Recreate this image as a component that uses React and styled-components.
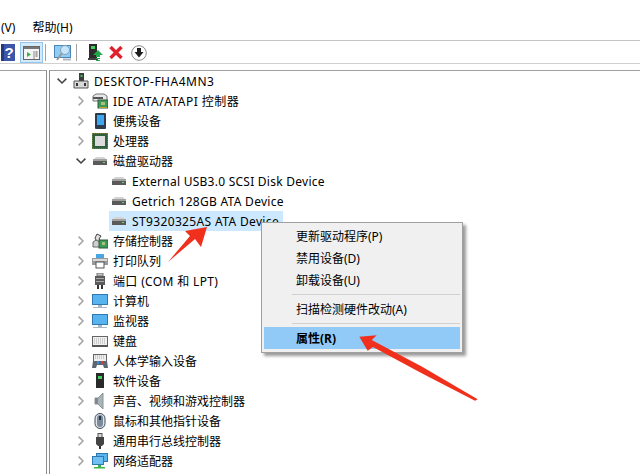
import styled, { createGlobalStyle } from "styled-components";

const GlobalStyle = createGlobalStyle`
  html, body {
    margin: 0;
    padding: 0;
    background: #fff;
  }
  body {
    font-family: "Noto Sans", "Noto Sans CJK SC", sans-serif;
    font-size: 12px;
    color: #000;
  }
`;

const Page = styled.div`
  position: relative;
  width: 640px;
  height: 474px;
  overflow: hidden;
  background: #fff;
`;

const MenuBar = styled.div`
  display: flex;
  gap: 17px;
  height: 40px;
  padding: 19px 0 0 1px;
  box-sizing: border-box;
  line-height: 18px;
`;

const Toolbar = styled.div`
  display: flex;
  align-items: center;
  height: 24px;
  box-sizing: border-box;
  padding-top: 1px;
  border-top: 1px solid #c4c4c8;
  border-bottom: 1px solid #d0d0d0;
`;

const ToolButton = styled.div`
  display: flex;
  align-items: center;
  justify-content: center;
  flex: none;
  width: ${(p) => p.$w}px;
  height: 21px;
  box-sizing: border-box;
  margin-left: ${(p) => p.$ml || 0}px;
  ${(p) => p.$active && "background: #d4e9fa; border: 1px solid #93c6ef;"}
`;

const ToolSep = styled.div`
  flex: none;
  width: 1px;
  height: 17px;
  margin: 0 ${(p) => p.$r}px 0 ${(p) => p.$l}px;
  background: #a0a0a0;
`;

const Body = styled.div`
  display: flex;
  height: 410px;
  padding-top: 6px;
  box-sizing: border-box;
`;

const SidePane = styled.div`
  flex: none;
  width: 47px;
  box-sizing: border-box;
  border-top: 1px solid #a0a0a0;
  border-right: 1px solid #8c8c8c;
`;

const TreePane = styled.div`
  flex: 1;
  margin-left: 2px;
  box-sizing: border-box;
  border-top: 1px solid #a0a0a0;
  border-left: 1px solid #8c8c8c;
`;

const Row = styled.div`
  display: flex;
  align-items: center;
  height: 20px;
  padding-left: ${(p) => 5 + p.$depth * 19}px;
`;

const Expander = styled.div`
  display: flex;
  align-items: center;
  justify-content: center;
  flex: none;
  width: 13px;
  height: 20px;
  margin-right: 3px;
`;

const RowLabel = styled.div`
  display: flex;
  align-items: center;
  gap: 6px;
  height: 20px;
  padding: 0 4px 0 3px;
  white-space: nowrap;
  letter-spacing: ${(p) => p.$track || 0}px;
  background: ${(p) => (p.$selected ? "#cce8ff" : "transparent")};
`;

const IconBox = styled.svg`
  flex: none;
  display: block;
  width: 16px;
  height: 16px;
  margin-left: -1px;
  margin-right: -1px;
`;

const ContextMenu = styled.div`
  position: absolute;
  left: 261px;
  top: 222px;
  width: 202px;
  height: 131px;
  box-sizing: border-box;
  padding: 2px;
  background: #f0f0f0;
  border: 1px solid #a0a0a0;
  box-shadow: 3px 3px 3px rgba(0, 0, 0, 0.4);
`;

const MenuItem = styled.div`
  display: flex;
  align-items: center;
  height: 22px;
  padding-left: 32px;
  background: ${(p) => (p.$hot ? "#91c9f7" : "transparent")};
  font-weight: ${(p) => (p.$hot ? 700 : 400)};
`;

const MenuSep = styled.div`
  height: 1px;
  margin: 3px 0 3px 28px;
  background: #d0d0d0;
`;

const Arrow = styled.svg`
  position: absolute;
  left: ${(p) => p.$x}px;
  top: ${(p) => p.$y}px;
`;

const Chevron = ({ open }) => (
  <svg width="10" height="10" viewBox="0 0 10 10">
    {open ? (
      <path d="M.6 2.6l4.4 4.4 4.4-4.4" fill="none" stroke="#444" strokeWidth="1.5" />
    ) : (
      <path d="M2.6.6l4.4 4.4-4.4 4.4" fill="none" stroke="#a6a6a6" strokeWidth="1.5" />
    )}
  </svg>
);

const icons = {
  computer: (
    <>
      <rect x="6" y="0" width="5" height="8" fill="#3c3c3c" />
      <rect x="7.5" y="2" width="2" height="2" fill="#3fc060" />
      <path d="M1 8h14v7H1z" fill="#d8d8d8" stroke="#555" />
      <rect x="3" y="10" width="2" height="3" fill="#333" />
      <rect x="11" y="10" width="2" height="3" fill="#333" />
    </>
  ),
  ide: (
    <>
      <path d="M1 3l3-2h8l3 2v5H1z" fill="#e8e8e8" stroke="#777" />
      <rect x="1" y="4" width="10" height="2" fill="#555" />
      <rect x="6" y="7" width="10" height="8" fill="#3f9a5a" stroke="#2c5d3a" />
      <rect x="9" y="9" width="4" height="3" fill="#a8c27a" />
      <rect x="7" y="14" width="8" height="1" fill="#c2a030" />
    </>
  ),
  portable: (
    <>
      <rect x="3" y="0" width="11" height="16" rx="1" fill="#2c3c4c" />
      <rect x="5" y="2" width="7" height="10" fill="#3ea6ee" />
    </>
  ),
  cpu: (
    <>
      <rect x="0" y="0" width="16" height="16" fill="#3c6a3c" stroke="#b09030" strokeDasharray="1 1" />
      <rect x="1" y="1" width="14" height="14" fill="#2f5f3f" />
      <rect x="3" y="3" width="10" height="10" fill="#dcdcdc" />
    </>
  ),
  disk: (
    <>
      <path d="M2 6l2-2h8l2 2z" fill="#d4d4d4" />
      <rect x="1" y="7" width="14" height="5" fill="#5a5a5a" />
      <rect x="1" y="6" width="14" height="2" fill="#a0a0a0" />
      <rect x="11" y="9" width="2" height="1" fill="#5fe060" />
    </>
  ),
  storage: (
    <>
      <path d="M5 1l4 2-2 3 2 2-4 1-2-4z" fill="#e0e0e0" stroke="#444" />
      <path d="M1 9l3-2 4 2v5H1z" fill="#cfcfcf" stroke="#666" />
      <rect x="7" y="7" width="9" height="8" fill="#3f9a5a" stroke="#2c5d3a" />
      <rect x="10" y="9" width="3" height="3" fill="#a8c27a" />
    </>
  ),
  printer: (
    <>
      <rect x="4" y="1" width="8" height="4" fill="#46a6e6" />
      <path d="M0 5h16v7H0z" fill="#9a9a9a" />
      <rect x="1" y="6" width="14" height="2" fill="#d8d8d8" />
      <rect x="4" y="9" width="8" height="6" fill="#fff" stroke="#555" />
    </>
  ),
  port: (
    <>
      <rect x="5" y="0" width="6" height="3" fill="#c0c0c0" stroke="#777" />
      <rect x="3" y="3" width="10" height="9" fill="#5a5a5a" />
      <rect x="4" y="5" width="8" height="1" fill="#aaa" />
      <rect x="4" y="8" width="8" height="1" fill="#aaa" />
      <rect x="5" y="12" width="2" height="4" fill="#333" />
      <rect x="9" y="12" width="2" height="4" fill="#333" />
    </>
  ),
  monitor: (
    <>
      <rect x="0.5" y="1.5" width="15" height="10" fill="#57b4ee" stroke="#2f78b0" />
      <rect x="6" y="12" width="4" height="2" fill="#a8b8c4" />
      <rect x="1" y="14" width="14" height="1" fill="#a8b8c4" />
    </>
  ),
  keyboard: (
    <>
      <rect x="0.5" y="3.5" width="15" height="9" fill="#f0f0f0" stroke="#666" />
      <path d="M2 6h12M2 8h12M2 10h12" stroke="#aaa" strokeDasharray="1 1" />
      <rect x="0" y="12" width="16" height="2" fill="#555" />
    </>
  ),
  hid: (
    <>
      <rect x="1.5" y="1.5" width="13" height="7" fill="#eee" stroke="#666" />
      <path d="M3 3h9M3 5h9" stroke="#aaa" strokeDasharray="1 1" />
      <path d="M1 8h14l1 7h-4l-1-3H5l-1 3H0z" fill="#5c6670" />
      <rect x="5" y="8" width="2" height="3" fill="#2f8fe0" />
      <rect x="9" y="8" width="2" height="3" fill="#d04040" />
    </>
  ),
  software: (
    <>
      <rect x="4" y="0" width="8" height="15" fill="#2a2a2a" />
      <rect x="6" y="3" width="4" height="3" fill="#3fd060" />
    </>
  ),
  sound: (
    <>
      <path d="M3 5h3l5-5v16l-5-5H3z" fill="#a8b4b8" stroke="#8a9498" />
      <rect x="3" y="5" width="3" height="6" fill="#7f8a8e" />
    </>
  ),
  mouse: (
    <>
      <rect x="3" y="0.5" width="10" height="15" rx="5" fill="#dfe4ea" stroke="#3c4a58" />
      <rect x="5" y="2" width="6" height="12" rx="3" fill="#7a8a9a" />
      <rect x="7" y="3" width="2" height="4" fill="#2a3440" />
    </>
  ),
  usb: (
    <>
      <rect x="6" y="0.5" width="4" height="4" fill="#d8d8d8" stroke="#555" />
      <path d="M4 4h8v7l-2 2h-4l-2-2z" fill="#444" />
      <rect x="7" y="13" width="2" height="3" fill="#333" />
    </>
  ),
  network: (
    <>
      <rect x="4.5" y="0.5" width="11" height="8" fill="#57b4ee" stroke="#2f78b0" />
      <rect x="0.5" y="3.5" width="11" height="8" fill="#6fc0f2" stroke="#2f78b0" />
      <path d="M6 12h3v2h4v1.6H2V14h4z" fill="#3cb44a" />
    </>
  ),
};

const Icon = ({ name }) => (
  <IconBox viewBox="0 0 16 16">{icons[name]}</IconBox>
);

const rows = [
  { depth: 0, open: true, icon: "computer", label: "DESKTOP-FHA4MN3", track: 0.5 },
  { depth: 1, icon: "ide", label: "IDE ATA/ATAPI 控制器", track: 0.47 },
  { depth: 1, icon: "portable", label: "便携设备" },
  { depth: 1, icon: "cpu", label: "处理器" },
  { depth: 1, open: true, icon: "disk", label: "磁盘驱动器" },
  { depth: 2, leaf: true, icon: "disk", label: "External USB3.0 SCSI Disk Device", track: 0.25 },
  { depth: 2, leaf: true, icon: "disk", label: "Getrich 128GB ATA Device", track: 0.29 },
  { depth: 2, leaf: true, icon: "disk", label: "ST9320325AS ATA Device", track: 0.36, selected: true },
  { depth: 1, icon: "storage", label: "存储控制器" },
  { depth: 1, icon: "printer", label: "打印队列" },
  { depth: 1, icon: "port", label: "端口 (COM 和 LPT)", track: 0.35 },
  { depth: 1, icon: "monitor", label: "计算机" },
  { depth: 1, icon: "monitor", label: "监视器" },
  { depth: 1, icon: "keyboard", label: "键盘" },
  { depth: 1, icon: "hid", label: "人体学输入设备" },
  { depth: 1, icon: "software", label: "软件设备" },
  { depth: 1, icon: "sound", label: "声音、视频和游戏控制器" },
  { depth: 1, icon: "mouse", label: "鼠标和其他指针设备" },
  { depth: 1, icon: "usb", label: "通用串行总线控制器" },
  { depth: 1, icon: "network", label: "网络适配器" },
];

export default function App() {
  return (
    <Page>
      <GlobalStyle />
      <MenuBar>
        <span>(V)</span>
        <span>帮助(H)</span>
      </MenuBar>
      <Toolbar>
        <ToolButton $w={14} $ml={1}>
          <svg width="14" height="17" viewBox="0 0 14 17">
            <rect width="14" height="17" fill="#3b55a8" />
            <rect x="0" y="0" width="3" height="17" fill="#26397c" />
            <text x="8" y="14" fill="#fff" fontSize="15" fontWeight="700" textAnchor="middle" fontFamily="Liberation Sans">?</text>
          </svg>
        </ToolButton>
        <ToolButton $w={23} $ml={5} $active>
          <svg width="17" height="14" viewBox="0 0 17 14">
            <rect x="0.5" y="0.5" width="16" height="13" fill="#f4f4f4" stroke="#666" />
            <rect x="1" y="1" width="15" height="2" fill="#777" />
            <path d="M4 6l4 2.5L4 11z" fill="#3ab04a" />
            <path d="M11 5v8" stroke="#888" />
            <path d="M12.5 6h2M12.5 8h2M12.5 10h2" stroke="#555" />
          </svg>
        </ToolButton>
        <ToolSep $l={2} $r={8} />
        <ToolButton $w={17}>
          <svg width="17" height="16" viewBox="0 0 17 16">
            <rect x="0.5" y="0.5" width="16" height="12" fill="#8fcdf5" stroke="#4a86b8" />
            <circle cx="11" cy="5" r="4.5" fill="#c5e6fa" stroke="#7f9fb8" />
            <path d="M8 8l-5 7" stroke="#9a9a9a" strokeWidth="2" />
            <path d="M9 14.5h8" stroke="#b0b8c0" strokeWidth="2" />
          </svg>
        </ToolButton>
        <ToolSep $l={5} $r={11} />
        <ToolButton $w={15}>
          <svg width="15" height="17" viewBox="0 0 15 17">
            <rect x="1" y="0" width="8" height="14" fill="#2c2c2c" />
            <rect x="3" y="2" width="4" height="3" fill="#3fd060" />
            <rect x="0" y="14" width="10" height="2" fill="#444" />
            <path d="M10 6l5 5h-3v2H8v-2H5z" fill="#22a84a" />
            <path d="M8 14.5h4M8 16.5h4" stroke="#22a84a" />
          </svg>
        </ToolButton>
        <ToolButton $w={14} $ml={6}>
          <svg width="14" height="13" viewBox="0 0 14 13">
            <path d="M1.5 1l11 11M12.5 1l-11 11" stroke="#e0202c" strokeWidth="3.4" />
          </svg>
        </ToolButton>
        <ToolButton $w={16} $ml={8}>
          <svg width="16" height="16" viewBox="0 0 16 16">
            <circle cx="8" cy="8" r="7.3" fill="#fff" stroke="#8a8a8a" />
            <path d="M6 3h4v4h2.5L8 12.5 3.5 7H6z" fill="#1c1c1c" />
          </svg>
        </ToolButton>
      </Toolbar>
      <Body>
        <SidePane />
        <TreePane>
          {rows.map((r) => (
            <Row key={r.label} $depth={r.depth}>
              <Expander>{!r.leaf && <Chevron open={r.open} />}</Expander>
              <RowLabel $selected={r.selected} $track={r.track}>
                <Icon name={r.icon} />
                {r.label}
              </RowLabel>
            </Row>
          ))}
        </TreePane>
      </Body>
      <ContextMenu>
        <MenuItem>更新驱动程序(P)</MenuItem>
        <MenuItem>禁用设备(D)</MenuItem>
        <MenuItem>卸载设备(U)</MenuItem>
        <MenuSep />
        <MenuItem>扫描检测硬件改动(A)</MenuItem>
        <MenuSep />
        <MenuItem $hot>属性(R)</MenuItem>
      </ContextMenu>
      <Arrow $x={160} $y={215} width="55" height="55" viewBox="0 0 55 55">
        <path d="M47 12L41 32 35 24 8 47 30 21 25 16z" fill="#f0301c" />
      </Arrow>
      <Arrow $x={355} $y={330} width="130" height="75" viewBox="0 0 130 75">
        <path d="M4.3 6.7L21.7 5.3 16.7 10 66.7 36.5 122.7 69.3 120 70.7 66.7 43.3 18 17 12.7 20.7z" fill="#f0301c" />
      </Arrow>
    </Page>
  );
}
